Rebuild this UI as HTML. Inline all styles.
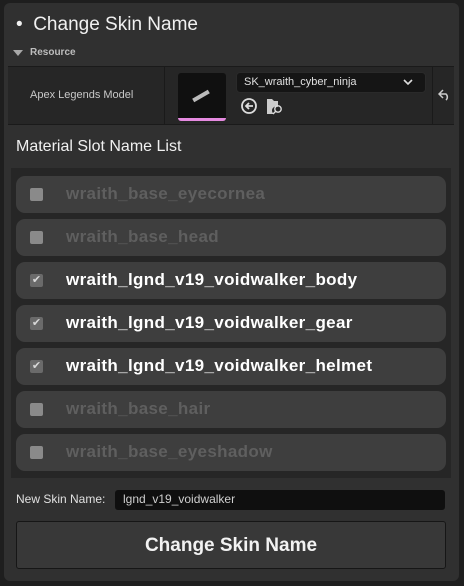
<!DOCTYPE html>
<html><head><meta charset="utf-8"><style>
*{box-sizing:border-box;margin:0;padding:0}
body{width:464px;height:586px;background:#1e1e1e;font-family:"Liberation Sans",sans-serif;position:relative;overflow:hidden}
.panel{position:absolute;left:4px;top:3px;width:455px;height:578px;background:#303030;border-radius:6px}
.abs{position:absolute}
.title{left:16px;top:14px;color:#f0f0f0;font-size:19px}
.res{left:12px;top:47px;color:#bdbdbd;font-size:10px;font-weight:bold}
.row{left:8px;top:66px;width:446px;height:59px;background:#262626;border-top:1px solid #1a1a1a;border-bottom:1px solid #1a1a1a}
.list{left:11px;top:168px;width:440px;height:310px;background:#262626}
.item{position:absolute;left:16px;width:430px;height:37px;background:#3e3e3e;border-radius:9px}
.cb{position:absolute;left:14px;top:12px;width:13px;height:13px;background:#8a8a8a;border-radius:2px}
.item span{position:absolute;left:50px;top:8px;font-size:17px;font-weight:bold;color:#5f5f5f;letter-spacing:0.35px}
.item.on span{color:#fff}
.item.on .cb{background:#6a6a6a;color:#d8d8d8;font-size:11px;line-height:13px;text-align:center}
</style></head><body>
<div class="panel"></div>
<div class="abs title">•&nbsp; Change Skin Name</div>
<div class="abs" style="left:13px;top:50px;width:0;height:0;border-left:5px solid transparent;border-right:5px solid transparent;border-top:6px solid #a8a8a8"></div>
<div class="abs res" style="left:30px">Resource</div>
<div class="abs row"></div>
<div class="abs" style="left:164px;top:67px;width:1px;height:57px;background:#1a1a1a"></div>
<div class="abs" style="left:432px;top:67px;width:1px;height:57px;background:#1a1a1a"></div>
<div class="abs" style="left:30px;top:89px;color:#c8c8c8;font-size:11px">Apex Legends Model</div>
<div class="abs" style="left:178px;top:73px;width:48px;height:48px;background:#101010;border-radius:3px;border-bottom:3px solid #e58ae0"></div>
<div class="abs" style="left:192px;top:94px;width:18px;height:4px;background:#bbb;transform:rotate(-30deg)"></div>
<div class="abs" style="left:236px;top:72px;width:190px;height:21px;background:#151515;border-radius:4px;border:1px solid #2a2a2a"></div>
<div class="abs" style="left:244px;top:76px;color:#e0e0e0;font-size:11px">SK_wraith_cyber_ninja</div>
<svg class="abs" style="left:402px;top:78px" width="12" height="8"><path d="M2 2l4 4 4-4" stroke="#ddd" stroke-width="1.6" fill="none"/></svg>
<svg class="abs" style="left:240px;top:97px" width="18" height="18"><circle cx="9" cy="9" r="7" stroke="#ddd" stroke-width="1.8" fill="none"/><path d="M13 9H6M9 6L6 9l3 3" stroke="#ddd" stroke-width="1.8" fill="none"/></svg>
<svg class="abs" style="left:266px;top:97px" width="18" height="18"><path d="M1 2h5l2 2h4v6a4 4 0 0 0-4 7H1z" fill="#ccc"/><circle cx="12" cy="12" r="3.2" stroke="#ddd" stroke-width="1.4" fill="none"/><path d="M10 14l-3 3" stroke="#ddd" stroke-width="1.4"/></svg>
<svg class="abs" style="left:438px;top:89px" width="14" height="12"><path d="M5 1L1 5l4 4M1 5h7a4 4 0 0 1 0 6" stroke="#ccc" stroke-width="1.5" fill="none"/></svg>
<div class="abs" style="left:16px;top:138px;color:#f0f0f0;font-size:16px">Material Slot Name List</div>
<div class="abs list"></div>
<div class="item" style="top:176px"><div class="cb"></div><span>wraith_base_eyecornea</span></div>
<div class="item" style="top:219px"><div class="cb"></div><span>wraith_base_head</span></div>
<div class="item on" style="top:262px"><div class="cb">✔</div><span>wraith_lgnd_v19_voidwalker_body</span></div>
<div class="item on" style="top:305px"><div class="cb">✔</div><span>wraith_lgnd_v19_voidwalker_gear</span></div>
<div class="item on" style="top:348px"><div class="cb">✔</div><span>wraith_lgnd_v19_voidwalker_helmet</span></div>
<div class="item" style="top:391px"><div class="cb"></div><span>wraith_base_hair</span></div>
<div class="item" style="top:434px"><div class="cb"></div><span>wraith_base_eyeshadow</span></div>
<div class="abs" style="left:16px;top:492px;color:#e0e0e0;font-size:12px">New Skin Name:</div>
<div class="abs" style="left:115px;top:490px;width:330px;height:20px;background:#0f0f0f;border-radius:3px"></div>
<div class="abs" style="left:123px;top:492px;color:#cfcfcf;font-size:12px">lgnd_v19_voidwalker</div>
<div class="abs" style="left:16px;top:521px;width:430px;height:48px;background:#383838;border:1px solid #161616;border-radius:3px;color:#f2f2f2;font-size:19px;font-weight:bold;text-align:center;line-height:48px">Change Skin Name</div>
</body></html>
